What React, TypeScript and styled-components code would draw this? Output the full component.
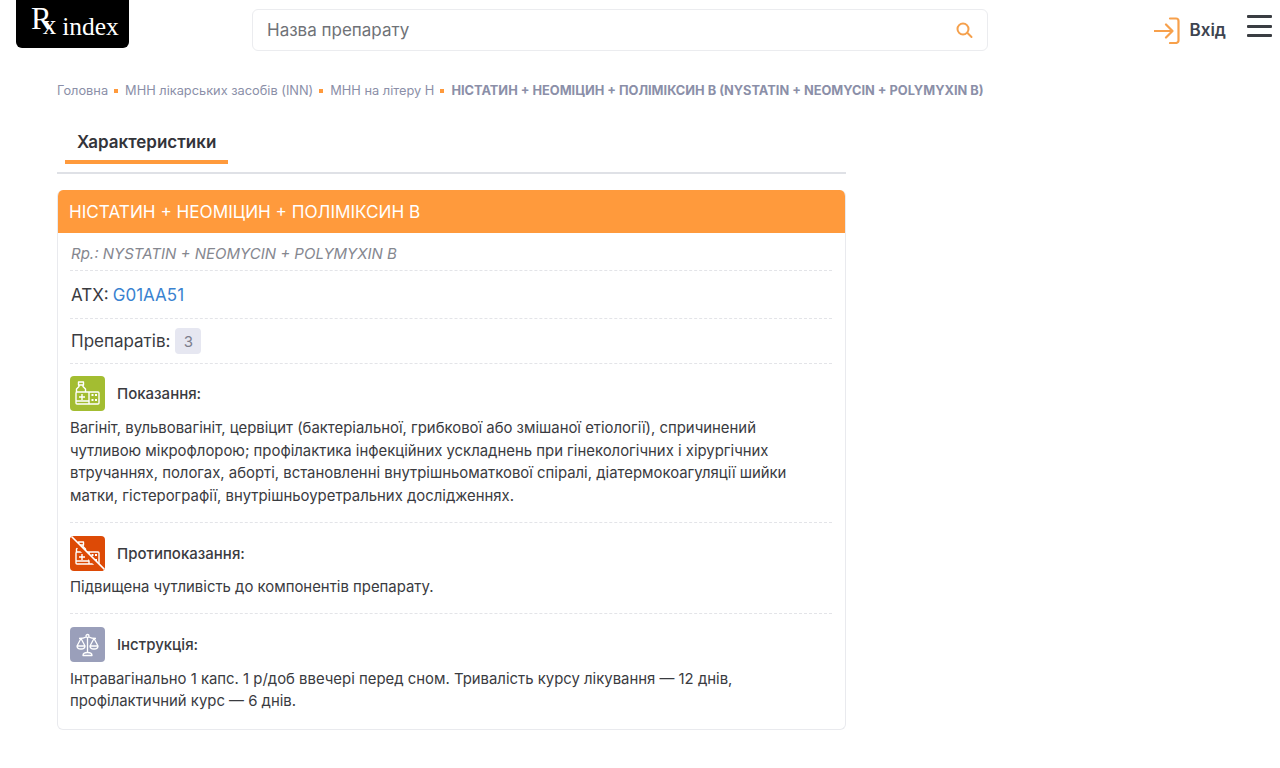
import React from 'react';
import styled, { createGlobalStyle } from 'styled-components';

const GlobalStyle = createGlobalStyle`
  html, body {
    margin: 0;
    padding: 0;
    background: #fff;
    font-family: Inter, "Liberation Sans", sans-serif;
    color: #3a3b3f;
  }
`;

const Header = styled.header`
  height: 60px;
  padding: 0 8px 0 16px;
  display: flex;
  align-items: flex-start;
`;

const Logo = styled.div`
  width: 113px;
  height: 48px;
  background: #000;
  border-radius: 0 0 6px 6px;
  color: #fff;
  font-family: "Liberation Serif", serif;
  display: flex;
  align-items: baseline;
  padding: 7px 0 0 15px;
  box-sizing: border-box;
  flex-shrink: 0;
  line-height: 36px;
  white-space: nowrap;

  .rx { display: inline-block; }
  .r { font-size: 31px; letter-spacing: -9px; position: relative; top: -6px; }
  .x { font-size: 27px; position: relative; top: -1px; }
  .index { font-size: 25.5px; margin-left: 6px; }
`;

const Search = styled.div`
  width: 736px;
  height: 42px;
  margin: 9px 0 0 123px;
  box-sizing: border-box;
  border: 1px solid #ebecef;
  border-radius: 6px;
  display: flex;
  align-items: center;
  justify-content: space-between;
  padding: 0 13px 0 14px;
  font-size: 17px;
  color: #6f7277;
`;

const Actions = styled.div`
  margin: 15px 0 0 auto;
  display: flex;
  align-items: center;
  height: 30px;
`;

const Login = styled.div`
  display: flex;
  align-items: center;
  gap: 9px;
  font-size: 17px;
  font-weight: 600;
  color: #3d4450;
`;

const Burger = styled.div`
  width: 25px;
  margin-left: 21px;
  display: flex;
  flex-direction: column;
  gap: 6.5px;
  position: relative;
  top: -4px;

  span {
    display: block;
    height: 3px;
    border-radius: 1px;
    background: #3a3d42;
  }
`;

const Breadcrumbs = styled.nav`
  margin: 23px 0 0 57px;
  display: flex;
  align-items: center;
  font-size: 12.8px;
  line-height: 15px;
  color: #8b8fa8;
  white-space: nowrap;
`;

const Crumb = styled.span<{ $current?: boolean }>`
  font-weight: ${p => (p.$current ? 700 : 400)};
`;

const Dot = styled.i`
  width: 4px;
  height: 4px;
  background: #ff9a3c;
  margin: 1px 7px 0 6px;
  flex-shrink: 0;
`;

const Main = styled.main`
  width: 789px;
  margin: 0 0 0 57px;
`;

const Tabs = styled.div`
  margin-top: 26px;
  height: 48px;
  border-bottom: 2px solid #dfe1e6;
  padding-left: 8px;
`;

const Tab = styled.div`
  width: 163px;
  height: 40px;
  box-sizing: border-box;
  padding: 8px 0 0 12px;
  border-bottom: 4px solid #ff9a3c;
  font-size: 17px;
  line-height: 20px;
  font-weight: 600;
  color: #33343a;
`;

const Card = styled.section`
  margin-top: 16px;
  border: 1px solid #e9eaee;
  border-top: 0;
  border-radius: 6px;
  overflow: hidden;
`;

const CardTitle = styled.h1`
  margin: 0 -1px;
  height: 43px;
  background: #ff9a3c;
  color: #fff;
  font-size: 17.15px;
  line-height: 43px;
  font-weight: 400;
  padding-left: 12px;
`;

const Row = styled.div<{ $height?: number }>`
  margin: 0 13px 0 12px;
  padding-left: 1px;
  border-bottom: 1px dashed #e3e4e8;
  display: flex;
  align-items: center;
  height: ${p => p.$height}px;
  font-size: 17px;
  color: #3a3b3f;
`;

const Latin = styled(Row)`
  padding-top: 4px;
  font-size: 15px;
  font-style: italic;
  color: #85878f;
`;

const Code = styled.a`
  color: #3a82d0;
  margin-left: 4px;
`;

const Badge = styled.span`
  width: 26px;
  height: 26px;
  margin-left: 5px;
  border-radius: 4px;
  background: #e6e7f1;
  color: #7b7d8c;
  font-size: 15px;
  display: flex;
  align-items: center;
  justify-content: center;
`;

const Block = styled.div<{ $top: number; $bottom: number; $last?: boolean }>`
  margin: 0 13px 0 12px;
  padding: ${p => p.$top}px 0 ${p => p.$bottom}px;
  border-bottom: ${p => (p.$last ? '0' : '1px dashed #e3e4e8')};
`;

const BlockHead = styled.div`
  display: flex;
  align-items: center;
  gap: 12px;
  font-size: 15px;
  font-weight: 500;
  color: #3a3b3f;
`;

const IconBox = styled.div<{ $bg: string }>`
  width: 35px;
  height: 35px;
  border-radius: 4px;
  background: ${p => p.$bg};
  position: relative;
  overflow: hidden;

  svg {
    display: block;
  }
`;

const Text = styled.p<{ $gap: number }>`
  margin: ${p => p.$gap}px 0 0;
  padding-right: 10px;
  font-size: 14.9px;
  line-height: 22.5px;
  color: #3a3b3f;
`;

const MedicineIcon = () => (
  <svg width="35" height="35" viewBox="0 0 35 35" fill="none" stroke="#fff" strokeWidth="1.4" strokeLinejoin="round">
    <rect x="8.5" y="6" width="5" height="3" />
    <path d="M9 9v1.500l-2.500 2.500v3M13 9v1.500l2.500 2.500v3" />
    <rect x="6" y="16" width="23" height="12" rx="1" />
    <path d="M6 25h13M19 16v12M9 21h6M12 18v6" />
    <path d="M21.500 19h2M25 19h2M21.500 24h2M25 24h2" strokeWidth="2" />
  </svg>
);

const ScalesIcon = () => (
  <svg width="35" height="35" viewBox="0 0 35 35" fill="none" stroke="#fff" strokeWidth="1.3" strokeLinejoin="round">
    <circle cx="17.500" cy="9" r="1.500" />
    <path d="M17.500 10.500V26M9 11.500c3 0 5.500-.500 7-1.500M26 11.500c-3 0-5.500-.500-7-1.500" />
    <path d="M11 11.500 7 19c0 2 2 3 4 3s4-1 4-3zM7 19h8" />
    <path d="M24 11.500 20 19c0 2 2 3 4 3s4-1 4-3zM20 19h8" />
    <path d="M13 28.500c0-2 2-3 4.500-3s4.500 1 4.500 3z" />
  </svg>
);

const Strike = styled.svg`
  position: absolute;
  left: 0;
  top: 0;
`;

const App: React.FC = () => (
  <>
    <GlobalStyle />
    <Header>
      <Logo>
        <span className="rx">
          <span className="r">R</span>
          <span className="x">x</span>
        </span>
        <span className="index">index</span>
      </Logo>
      <Search>
        <span>Назва препарату</span>
        <svg width="20" height="20" viewBox="0 0 20 20" fill="none" stroke="#f5a04c" strokeWidth="2" strokeLinecap="round">
          <circle cx="9" cy="9" r="5.500" />
          <path d="m13.500 13 4 4" />
        </svg>
      </Search>
      <Actions>
        <Login>
          <svg width="27" height="27" viewBox="0 0 27 27" fill="none" stroke="#f7a04b" strokeWidth="2.200" strokeLinecap="round" strokeLinejoin="round">
            <path d="M.5 14h18M12 7.500l6.500 6.500-6.500 6.500" />
            <path d="M16 1.500h6a2.500 2.500 0 0 1 2.500 2.500v19.500a2.500 2.500 0 0 1-2.500 2.500h-6" />
          </svg>
          Вхід
        </Login>
        <Burger>
          <span />
          <span />
          <span />
        </Burger>
      </Actions>
    </Header>
    <Breadcrumbs>
      <Crumb>Головна</Crumb>
      <Dot />
      <Crumb>МНН лікарських засобів (INN)</Crumb>
      <Dot />
      <Crumb>МНН на літеру Н</Crumb>
      <Dot />
      <Crumb $current>НІСТАТИН + НЕОМІЦИН + ПОЛІМІКСИН B (NYSTATIN + NEOMYCIN + POLYMYXIN B)</Crumb>
    </Breadcrumbs>
    <Main>
      <Tabs>
        <Tab>Характеристики</Tab>
      </Tabs>
      <Card>
        <CardTitle>НІСТАТИН + НЕОМІЦИН + ПОЛІМІКСИН B</CardTitle>
        <Latin $height={33}>Rp.: NYSTATIN + NEOMYCIN + POLYMYXIN B</Latin>
        <Row $height={47}>
          АТХ:<Code>G01AA51</Code>
        </Row>
        <Row $height={44}>
          Препаратів:<Badge>3</Badge>
        </Row>
        <Block $top={12} $bottom={15}>
          <BlockHead>
            <IconBox $bg="#a3bd31"><MedicineIcon /></IconBox>
            Показання:
          </BlockHead>
          <Text $gap={6}>
            Вагініт, вульвовагініт, цервіцит (бактеріальної, грибкової або змішаної етіології), спричинений
            чутливою мікрофлорою; профілактика інфекційних ускладнень при гінекологічних і хірургічних
            втручаннях, пологах, аборті, встановленні внутрішньоматкової спіралі, діатермокоагуляції шийки
            матки, гістерографії, внутрішньоуретральних дослідженнях.
          </Text>
        </Block>
        <Block $top={13} $bottom={14}>
          <BlockHead>
            <IconBox $bg="#dd4a06">
              <MedicineIcon />
              <Strike width="35" height="35" viewBox="0 0 35 35">
                <path d="M0 2 33 35" stroke="#dd4a06" strokeWidth="4" />
                <path d="M1 0 35 34" stroke="#fff" strokeWidth="1.600" />
              </Strike>
            </IconBox>
            Протипоказання:
          </BlockHead>
          <Text $gap={5}>Підвищена чутливість до компонентів препарату.</Text>
        </Block>
        <Block $top={13} $bottom={16} $last>
          <BlockHead>
            <IconBox $bg="#9a9fba"><ScalesIcon /></IconBox>
            Інструкція:
          </BlockHead>
          <Text $gap={6}>
            Інтравагінально 1 капс. 1 р/доб ввечері перед сном. Тривалість курсу лікування — 12 днів,
            профілактичний курс — 6 днів.
          </Text>
        </Block>
      </Card>
    </Main>
  </>
);

export default App;
